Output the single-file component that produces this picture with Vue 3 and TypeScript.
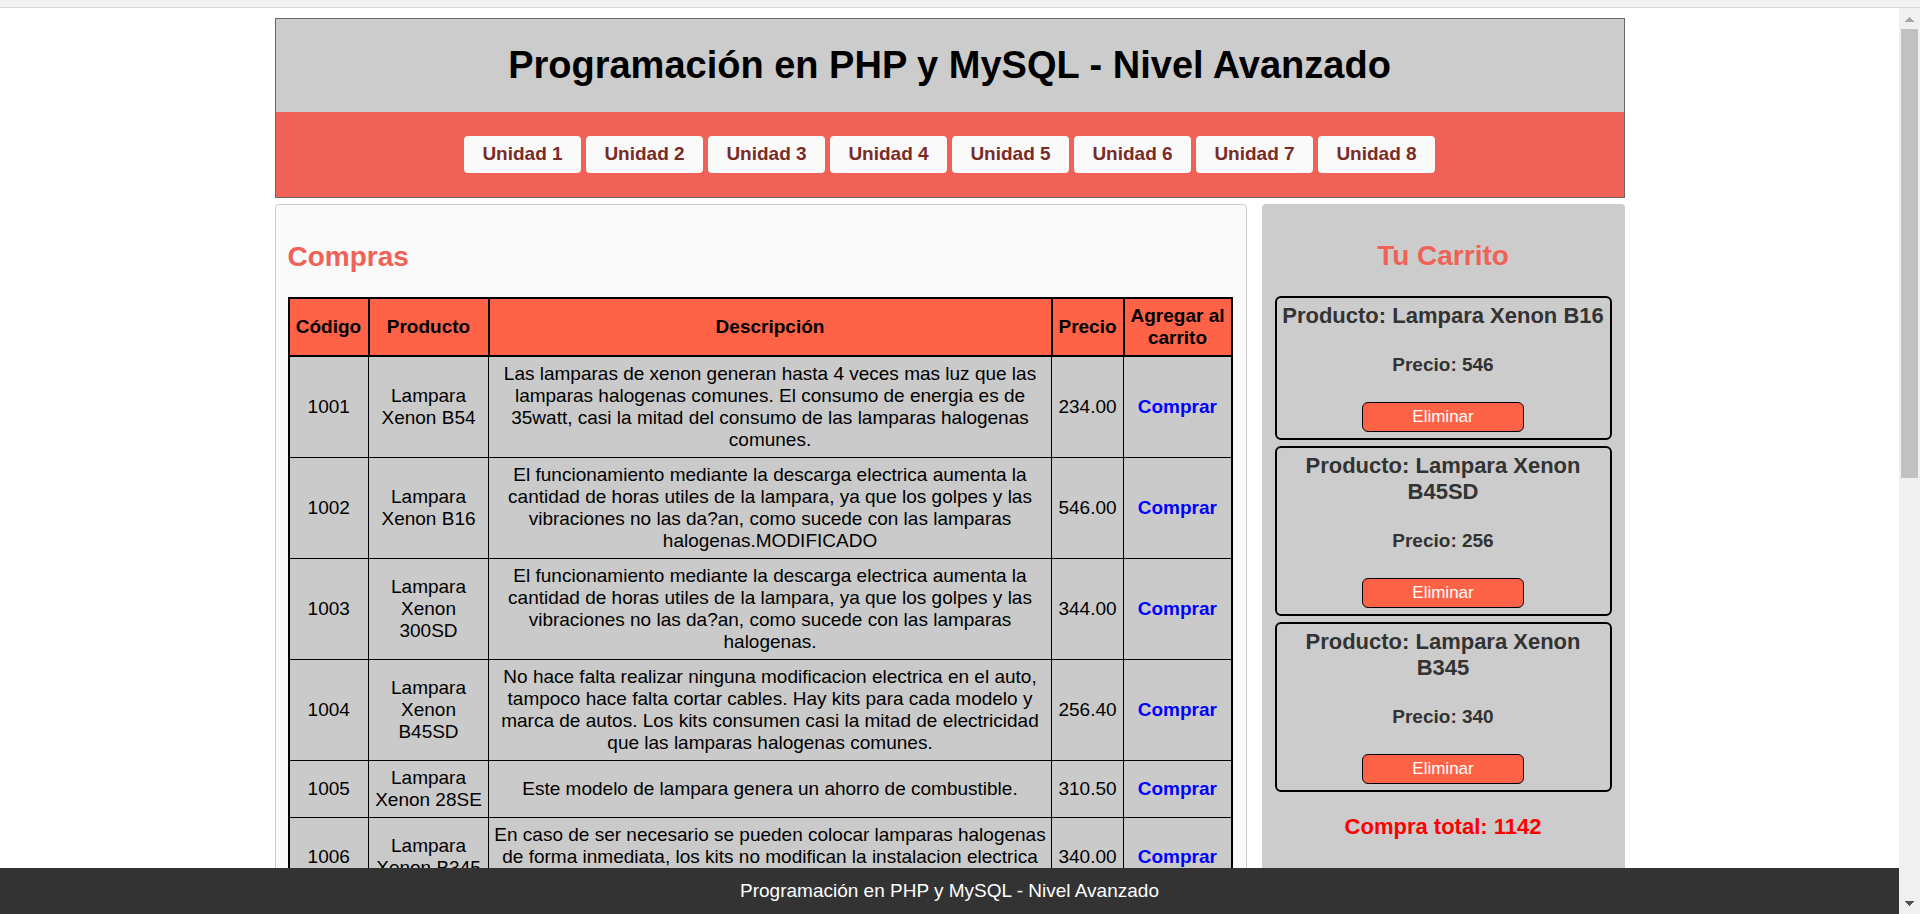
<script setup lang="ts">
import { computed } from 'vue'

interface Product {
  code: number
  name: string
  description: string
  price: string
}

interface CartItem {
  name: string
  price: number
}

const courseTitle = 'Programación en PHP y MySQL - Nivel Avanzado'
const units: number[] = [1, 2, 3, 4, 5, 6, 7, 8]

const products: Product[] = [
  {
    code: 1001,
    name: 'Lampara Xenon B54',
    description:
      'Las lamparas de xenon generan hasta 4 veces mas luz que las lamparas halogenas comunes. El consumo de energia es de 35watt, casi la mitad del consumo de las lamparas halogenas comunes.',
    price: '234.00',
  },
  {
    code: 1002,
    name: 'Lampara Xenon B16',
    description:
      'El funcionamiento mediante la descarga electrica aumenta la cantidad de horas utiles de la lampara, ya que los golpes y las vibraciones no las da?an, como sucede con las lamparas halogenas.MODIFICADO',
    price: '546.00',
  },
  {
    code: 1003,
    name: 'Lampara Xenon 300SD',
    description:
      'El funcionamiento mediante la descarga electrica aumenta la cantidad de horas utiles de la lampara, ya que los golpes y las vibraciones no las da?an, como sucede con las lamparas halogenas.',
    price: '344.00',
  },
  {
    code: 1004,
    name: 'Lampara Xenon B45SD',
    description:
      'No hace falta realizar ninguna modificacion electrica en el auto, tampoco hace falta cortar cables. Hay kits para cada modelo y marca de autos. Los kits consumen casi la mitad de electricidad que las lamparas halogenas comunes.',
    price: '256.40',
  },
  {
    code: 1005,
    name: 'Lampara Xenon 28SE',
    description: 'Este modelo de lampara genera un ahorro de combustible.',
    price: '310.50',
  },
  {
    code: 1006,
    name: 'Lampara Xenon B345',
    description:
      'En caso de ser necesario se pueden colocar lamparas halogenas de forma inmediata, los kits no modifican la instalacion electrica del auto.',
    price: '340.00',
  },
]

const cart: CartItem[] = [
  { name: 'Lampara Xenon B16', price: 546 },
  { name: 'Lampara Xenon B45SD', price: 256 },
  { name: 'Lampara Xenon B345', price: 340 },
]

const total = computed(() => cart.reduce((sum, item) => sum + item.price, 0))
</script>

<template>
  <div class="window">
    <div class="toolbar-edge"></div>
    <div class="viewport">
      <div class="page">
        <div class="content">
          <div class="container">
            <header class="header">
              <h1>{{ courseTitle }}</h1>
              <nav class="nav">
                <a v-for="unit in units" :key="unit" href="#" class="unit">Unidad {{ unit }}</a>
              </nav>
            </header>

            <div class="columns">
              <main class="shop">
                <h2>Compras</h2>
                <table class="products">
                  <colgroup>
                    <col class="col-code" />
                    <col class="col-name" />
                    <col />
                    <col class="col-price" />
                    <col class="col-buy" />
                  </colgroup>
                  <thead>
                    <tr>
                      <th>Código</th>
                      <th>Producto</th>
                      <th>Descripción</th>
                      <th>Precio</th>
                      <th>Agregar al carrito</th>
                    </tr>
                  </thead>
                  <tbody>
                    <tr v-for="product in products" :key="product.code">
                      <td>{{ product.code }}</td>
                      <td>{{ product.name }}</td>
                      <td class="description">{{ product.description }}</td>
                      <td>{{ product.price }}</td>
                      <td><a href="#" class="buy">Comprar</a></td>
                    </tr>
                  </tbody>
                </table>
              </main>

              <aside class="cart">
                <h2>Tu Carrito</h2>
                <section v-for="item in cart" :key="item.name" class="item">
                  <h3>Producto: {{ item.name }}</h3>
                  <p>Precio: {{ item.price }}</p>
                  <button type="button">Eliminar</button>
                </section>
                <p class="total">Compra total: {{ total }}</p>
              </aside>
            </div>
          </div>
        </div>
        <footer class="footer">{{ courseTitle }}</footer>
      </div>

      <div class="scrollbar" aria-hidden="true">
        <svg class="arrow" viewBox="0 0 21 21" shape-rendering="crispEdges">
          <path d="M10 9h1v1h1v1h1v1h1v1h1v1H6v-1h1v-1h1v-1h1v-1h1z" fill="#a3a3a3" />
        </svg>
        <div class="track"><div class="thumb"></div></div>
        <svg class="arrow" viewBox="0 0 21 21" shape-rendering="crispEdges">
          <path d="M6 8h9v1h-1v1h-1v1h-1v1h-1v1h-1v-1H9v-1H8v-1H7V9H6z" fill="#505050" />
        </svg>
      </div>
    </div>
  </div>
</template>

<style>
body {
  margin: 0;
  background: #fff;
}
</style>

<style scoped>
.window {
  display: flex;
  flex-direction: column;
  height: 100vh;
  overflow: hidden;
  font-family: "Liberation Sans", Arial, sans-serif;
  font-size: 19px;
  line-height: 22px;
  color: #000;
}

.window * {
  box-sizing: border-box;
}

.toolbar-edge {
  flex: none;
  height: 8px;
  background: #f2f2f2;
  border-bottom: 1px solid #d8d8d8;
}

.viewport {
  flex: 1;
  display: flex;
  min-height: 0;
}

.page {
  flex: 1;
  display: flex;
  flex-direction: column;
  min-width: 0;
}

.content {
  flex: 1;
  min-height: 0;
  overflow: hidden;
  padding-top: 10px;
}

.container {
  max-width: 1350px;
  margin: 0 auto;
}

.header {
  border: 1px solid #666;
  background: #ccc;
  text-align: center;
}

h1 {
  margin: 0;
  padding: 25px 0 26px;
  font-size: 38px;
  line-height: 42px;
}

.nav {
  display: flex;
  justify-content: center;
  gap: 5px;
  padding: 24px 0;
  background: #f06257;
}

.unit {
  min-width: 117px;
  padding: 7px 18px 8px;
  border-radius: 4px;
  background: #fafafa;
  color: #7a2b26;
  font-weight: bold;
  text-decoration: none;
}

.columns {
  display: flex;
  gap: 15px;
  margin-top: 6px;
}

.shop {
  flex: 1;
  min-width: 0;
  padding: 36px 13px 12px 12px;
  border: 1px solid #ccc;
  border-radius: 4px;
  background: #fafafa;
}

h2 {
  margin: 0 0 24px;
  color: #f06257;
  font-size: 28px;
  line-height: 32px;
}

.products {
  width: 100%;
  table-layout: fixed;
  border-collapse: collapse;
  border: 2px solid #000;
  background: #cacaca;
  text-align: center;
}

.col-code {
  width: 80px;
}

.col-name {
  width: 120px;
}

.col-price {
  width: 72px;
}

.col-buy {
  width: 108px;
}

th,
td {
  padding: 6px 5px;
  border: 1px solid #000;
}

th {
  border: 2px solid #000;
  background: #ff6347;
  padding: 6px 4px;
}

.description {
  padding: 6px 5px;
}

.buy {
  color: #00f;
  font-weight: bold;
  text-decoration: none;
}

.cart {
  width: 363px;
  padding: 36px 13px;
  border-radius: 4px;
  background: #ccc;
  color: #333;
  text-align: center;
}

.item {
  margin-bottom: 6px;
  padding: 5px 5px 6px;
  border: 2px solid #000;
  border-radius: 6px;
}

h3 {
  margin: 0 0 25px;
  font-size: 22px;
  line-height: 26px;
}

.item p {
  margin: 0 0 26px;
  font-weight: bold;
}

button {
  display: block;
  width: 50%;
  height: 30px;
  margin: 0 auto;
  padding: 0;
  border: 1px solid #000;
  border-radius: 6px;
  background: #ff6347;
  color: #fff;
  font-family: inherit;
  font-size: 17px;
}

.total {
  margin: 22px 0;
  color: #f00;
  font-size: 22px;
  font-weight: bold;
  line-height: 26px;
}

.footer {
  flex: none;
  padding: 12px 0;
  background: #333;
  color: #fff;
  text-align: center;
}

.scrollbar {
  flex: none;
  display: flex;
  flex-direction: column;
  width: 21px;
  background: #f0f0f0;
}

.arrow {
  flex: none;
  width: 21px;
  height: 21px;
}

.track {
  flex: 1;
  padding: 0 2px;
}

.thumb {
  height: 52%;
  background: #c1c1c1;
}
</style>
